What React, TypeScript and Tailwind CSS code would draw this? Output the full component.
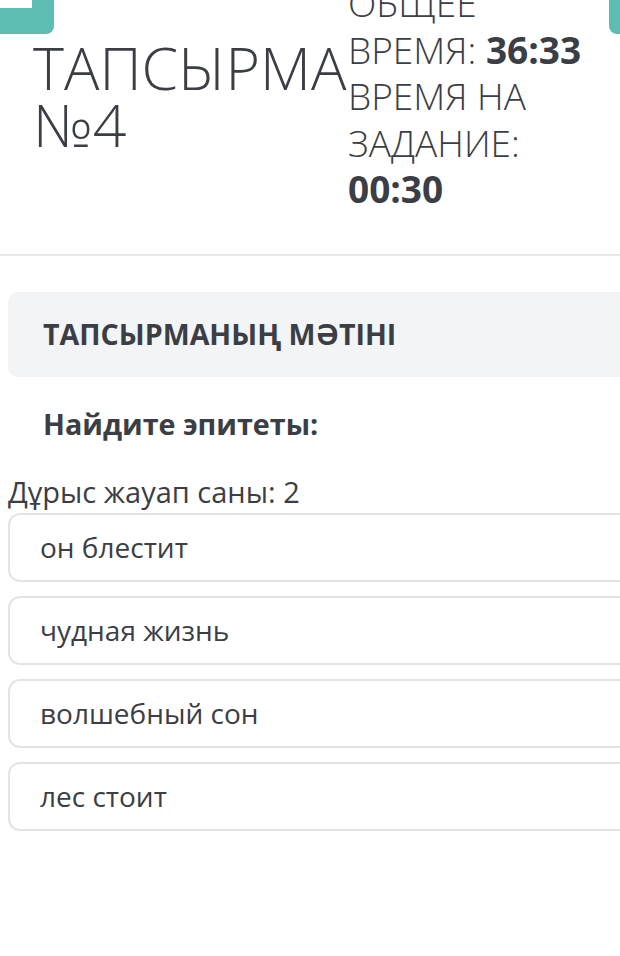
export default function App() {
  const options = ["он блестит", "чудная жизнь", "волшебный сон", "лес стоит"];
  return (
    <div className="relative h-[956px] w-[620px] overflow-hidden bg-white font-['Open_Sans',sans-serif] text-[#3b3e44]">
      {/* fixed side buttons */}
      <div className="absolute left-0 top-0 h-[34px] w-[54px] rounded-br-[8px] bg-[#5dbdb3]">
        <div className="h-[8px] w-[32px] bg-white" />
      </div>
      <div className="absolute left-[609px] top-0 h-[34px] w-[30px] rounded-bl-[8px] bg-[#5dbdb3]" />

      <div className="-mt-[20px] flex items-start">
        <div className="ml-[33px] mt-[59px] w-[315px] text-[59px] font-light leading-[57px]">
          ТАПСЫРМА №4
        </div>
        <div className="w-[250px] text-[37px] font-light leading-[46.5px]">
          ОБЩЕЕ ВРЕМЯ: <b className="font-bold">36:33</b> ВРЕМЯ НА ЗАДАНИЕ: <b className="font-bold">00:30</b>
        </div>
      </div>

      <div className="mt-[41px] h-[2px] w-full bg-[#e8e8e8]" />

      <div className="ml-[8px] mt-[36px] flex h-[85px] w-[640px] items-center rounded-[10px] bg-[#f3f4f6] pl-[35px]">
        <span className="text-[28.6px] font-bold">ТАПСЫРМАНЫҢ МӘТІНІ</span>
      </div>

      <div className="ml-[43px] mt-[23px] text-[28.7px] font-bold leading-[48px]">Найдите эпитеты:</div>

      <div className="ml-[8px] mt-[26px] text-[29px] font-normal leading-[36px]">Дұрыс жауап саны: 2</div>

      <div className="ml-[8px] mt-[3px] flex w-[640px] flex-col gap-[14px]">
        {options.map((o) => (
          <div
            key={o}
            className="flex h-[69px] items-center rounded-[12px] border-2 border-[#e4e4e4] pl-[30px] text-[28px] leading-[36px]"
          >
            {o}
          </div>
        ))}
      </div>
    </div>
  );
}
